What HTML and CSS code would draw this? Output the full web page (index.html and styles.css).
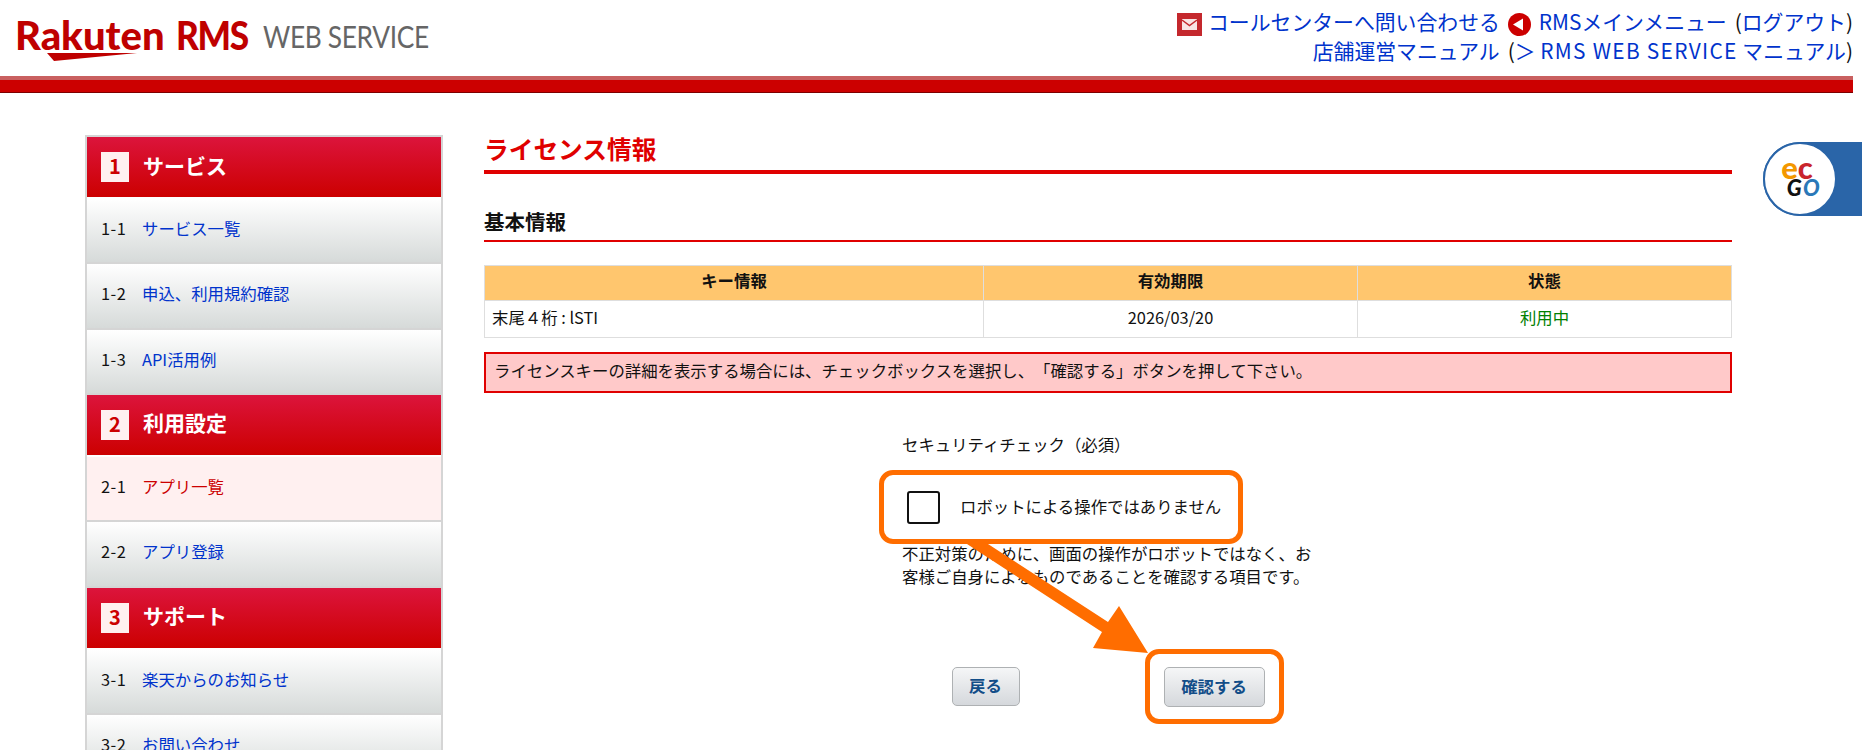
FILE: index.html
```html
<!DOCTYPE html>
<html lang="ja">
<head>
    <meta charset="UTF-8">
    <title>ライセンス情報 | RMS WEB SERVICE</title>
    <link rel="stylesheet" href="styles.css">
</head>
<body>
    <div class="page">
        <header class="site-header">
            <a href="#" class="logo">
                <span class="logo-mark">Rakuten</span>
                <span class="logo-rms">RMS</span>
                <svg class="logo-swoosh" width="92" height="10" viewBox="0 0 92 10"><polygon points="0,1 90,1 7,9" fill="#bf0000"/></svg>
                <span class="logo-service">WEB SERVICE</span>
            </a>
            <div class="top-links">
                <div class="top-line">
                    <svg class="icon-mail" width="25" height="23" viewBox="0 0 25 23">
                        <rect width="25" height="23" fill="#c4282d"/>
                        <rect x="5" y="6" width="15" height="11" fill="#f8e4e4"/>
                        <path d="M5 7l7.5 5.5L20 7" fill="none" stroke="#c4282d" stroke-width="1.5"/>
                    </svg>
                    <a href="#">コールセンターへ問い合わせる</a>
                    <svg class="icon-back" width="23" height="23" viewBox="0 0 23 23">
                        <circle cx="11.5" cy="11.5" r="11.5" fill="#cc0000"/>
                        <polygon points="5,11.5 15,5.5 15,17.5" fill="#fff"/>
                    </svg>
                    <a href="#">RMSメインメニュー</a>
                    <span>(<a href="#">ログアウト</a>)</span>
                </div>
                <div class="top-line">
                    <a href="#">店舗運営マニュアル</a>
                    <span>(<a href="#" class="manual-link">＞ <span class="latin">RMS WEB SERVICE</span> マニュアル</a>)</span>
                </div>
            </div>
        </header>
        <div class="header-bar"></div>

        <div class="layout">
            <nav class="sidebar">
                <h2 class="side-title"><span class="side-num">1</span><span class="side-label">サービス</span></h2>
                <div class="side-item"><span class="side-no">1-1</span><a href="#">サービス一覧</a></div>
                <div class="side-item"><span class="side-no">1-2</span><a href="#">申込、利用規約確認</a></div>
                <div class="side-item"><span class="side-no">1-3</span><a href="#">API活用例</a></div>
                <h2 class="side-title"><span class="side-num">2</span><span class="side-label">利用設定</span></h2>
                <div class="side-item current"><span class="side-no">2-1</span><a href="#">アプリ一覧</a></div>
                <div class="side-item"><span class="side-no">2-2</span><a href="#">アプリ登録</a></div>
                <h2 class="side-title"><span class="side-num">3</span><span class="side-label">サポート</span></h2>
                <div class="side-item"><span class="side-no">3-1</span><a href="#">楽天からのお知らせ</a></div>
                <div class="side-item"><span class="side-no">3-2</span><a href="#">お問い合わせ</a></div>
            </nav>

            <main class="content">
                <h1 class="page-title">ライセンス情報</h1>
                <h2 class="section-title">基本情報</h2>
                <table class="info-table">
                    <tr>
                        <th class="col-key">キー情報</th>
                        <th class="col-date">有効期限</th>
                        <th>状態</th>
                    </tr>
                    <tr>
                        <td>末尾４桁 : lSTI</td>
                        <td class="center">2026/03/20</td>
                        <td class="center status">利用中</td>
                    </tr>
                </table>
                <p class="notice">ライセンスキーの詳細を表示する場合には、チェックボックスを選択し、「確認する」ボタンを押して下さい。</p>

                <div class="security">
                    <p class="security-label">セキュリティチェック（必須）</p>
                    <label class="captcha">
                        <span class="captcha-box"></span>
                        <span class="captcha-text">ロボットによる操作ではありません</span>
                    </label>
                    <p class="security-note">不正対策のために、画面の操作がロボットではなく、お客様ご自身によるものであることを確認する項目です。</p>
                </div>

                <div class="buttons">
                    <button class="btn btn-back">戻る</button>
                    <button class="btn btn-confirm">確認する</button>
                </div>
            </main>
        </div>

        <a href="#" class="ecgo">
            <span class="ecgo-circle">
                <span class="ecgo-top"><span class="c-orange">e</span><span class="c-red">c</span></span>
                <span class="ecgo-bottom"><span class="c-black">G</span><span class="c-blue">O</span></span>
            </span>
        </a>

        <!-- orange marks drawn over the screen -->
        <div class="mark mark-captcha"></div>
        <div class="mark mark-confirm"></div>
        <svg class="mark-arrow" width="190" height="125" viewBox="0 0 190 125">
            <polygon points="7,0 28,0 148,78 159,62 188,109 133,104 142,88" fill="#ff6d00"/>
        </svg>
    </div>
</body>
</html>
```

FILE: styles.css
```css
html,
body {
    margin: 0;
    padding: 0;
    height: 750px;
    overflow: hidden;
    background: #fff;
}
body {
    font-family: "Noto Sans CJK JP", "Noto Sans", sans-serif;
    font-size: 16.4px;
    color: #111;
    text-spacing-trim: space-all;
}
a {
    color: #0033cc;
    text-decoration: none;
}
.page {
    position: relative;
    width: 1853px;
    height: 750px;
}

/* header */
.site-header {
    height: 76px;
    display: flex;
    justify-content: space-between;
}
.logo {
    position: relative;
    display: flex;
    align-items: baseline;
    height: 76px;
    padding-left: 15px;
    box-sizing: border-box;
    line-height: 70px;
    white-space: nowrap;
}
.logo-mark,
.logo-rms {
    font-family: "Lato", sans-serif;
    font-weight: 900;
    font-size: 40px;
    color: #bf0000;
    letter-spacing: 0;
}
.logo-rms {
    margin-left: 11px;
    letter-spacing: -1.5px;
    transform: scaleX(0.88);
    transform-origin: left;
}
.logo-swoosh {
    position: absolute;
    left: 47px;
    top: 52px;
}
.logo-service {
    font-family: "Lato", sans-serif;
    font-size: 30px;
    color: #666;
    margin-left: 6px;
    letter-spacing: -0.4px;
    transform: translateY(-2px) scaleX(0.877);
    transform-origin: left;
}
.top-links {
    padding: 5px 0 0 0;
    font-size: 20.85px;
    line-height: 28px;
}
.top-line {
    display: flex;
    justify-content: flex-end;
    align-items: center;
    gap: 8px;
    white-space: nowrap;
}
.top-line svg {
    margin-top: 8px;
}
.top-line .icon-mail {
    margin-right: -2px;
}
.latin {
    letter-spacing: 1.3px;
}
.header-bar {
    height: 12px;
    background: #cc0000;
    border-top: 4px solid #c96060;
    border-bottom: 1px solid #7d0000;
}

/* layout */
.layout {
    display: flex;
    gap: 41px;
    padding: 42px 0 0 85px;
}
.sidebar {
    width: 354px;
    flex: none;
    border: 2px solid #d5d5d5;
    border-bottom: none;
}
.side-title {
    display: flex;
    align-items: center;
    gap: 14px;
    height: 60px;
    margin: 0 0 2px;
    padding-left: 14px;
    font-size: 21px;
    font-weight: 700;
    color: #fff;
    background: linear-gradient(#dc143c, #cc0000);
}
.side-label {
    padding-bottom: 5px;
}
.side-num {
    width: 28px;
    height: 30px;
    line-height: 28px;
    text-align: center;
    background: #fff0f0;
    color: #cc0000;
    font-size: 20px;
}
.side-item {
    display: flex;
    align-items: center;
    gap: 16px;
    height: 58.33px;
    padding: 0 0 5px 14px;
    border-bottom: 2px solid #d5d5d5;
    background: linear-gradient(#fff, #d6dad9);
}
.side-no {
    width: 25px;
    letter-spacing: 0.5px;
    white-space: nowrap;
}
.side-item.current {
    background: #fff0f0;
}
.side-item.current a {
    color: #cc0000;
}

/* main */
.content {
    width: 1248px;
}
.page-title {
    margin: 0;
    height: 35px;
    line-height: 27px;
    font-size: 24.7px;
    font-weight: 700;
    color: #e00000;
    border-bottom: 4px solid #e00000;
}
.section-title {
    margin: 35px 0 0;
    height: 31px;
    line-height: 24px;
    font-size: 20.5px;
    font-weight: 700;
    color: #111;
    border-bottom: 2px solid #e00000;
}
.info-table {
    width: 100%;
    margin-top: 23px;
    border-collapse: collapse;
    table-layout: fixed;
}
.info-table th,
.info-table td {
    border: 1px solid #dedede;
    padding: 0 7px 4px;
}
.info-table th {
    height: 27px;
    padding-bottom: 7px;
    background: #ffc66e;
    font-weight: 700;
    text-align: center;
}
.info-table td {
    height: 32px;
}
.col-key {
    width: 484px;
}
.col-date {
    width: 359px;
}
.center {
    text-align: center;
}
.status {
    color: #008000;
}
.notice {
    margin: 14px 0 0;
    padding: 0 8px;
    height: 37px;
    line-height: 32px;
    background: #ffc9c9;
    border: 2px solid #e00000;
}
.security {
    width: 412px;
    margin: 0 auto;
}
.security-label {
    margin: 39px 0 0;
    line-height: 24px;
}
.captcha {
    display: flex;
    align-items: center;
    gap: 20px;
    height: 74px;
    margin-top: 14px;
    padding-left: 5px;
    white-space: nowrap;
}
.captcha-box {
    width: 29px;
    height: 29px;
    border: 2px solid #111;
    border-radius: 3px;
}
.captcha-text {
    padding-bottom: 2px;
}
.security-note {
    margin: -2px 0 0;
    line-height: 23px;
}
.buttons {
    display: flex;
    justify-content: center;
    gap: 144px;
    margin-top: 79px;
}
.btn {
    height: 39px;
    padding: 0 0 3px;
    border: 1px solid #aeb1b3;
    border-radius: 5px;
    background: linear-gradient(#f5f6f7, #d5d8dc);
    font-family: inherit;
    font-size: 16.4px;
    font-weight: 700;
    color: #124d88;
}
.btn-back {
    width: 68px;
}
.btn-confirm {
    width: 101px;
    height: 40px;
}

/* ecgo tab, fixed to the right edge */
.ecgo {
    position: absolute;
    left: 1763px;
    top: 142px;
    width: 99px;
    height: 74px;
    background: #2a65a8;
    border-radius: 37px 0 0 37px;
}
.ecgo-circle {
    display: flex;
    flex-direction: column;
    align-items: center;
    justify-content: center;
    box-sizing: border-box;
    width: 74px;
    height: 74px;
    padding-bottom: 4px;
    border: 2px solid #2a65a8;
    border-radius: 50%;
    background: #fff;
    font-family: "Lato", sans-serif;
    font-weight: 900;
}
.ecgo-top {
    height: 17px;
    line-height: 17px;
    font-size: 31px;
    margin: 0 0 3px -6px;
}
.ecgo-bottom {
    height: 17px;
    line-height: 17px;
    font-size: 22px;
    font-style: italic;
    letter-spacing: 1.5px;
    margin-left: 8px;
}
.c-orange {
    color: #f39800;
}
.c-red {
    color: #c9252c;
}
.c-black {
    color: #111;
}
.c-blue {
    color: #2a78b8;
}

/* annotation marks */
.mark {
    position: absolute;
    border: 5px solid #ff6d00;
    border-radius: 14px;
    box-sizing: border-box;
}
.mark-captcha {
    left: 879px;
    top: 470px;
    width: 364px;
    height: 74px;
}
.mark-confirm {
    left: 1145px;
    top: 649px;
    width: 139px;
    height: 75px;
}
.mark-arrow {
    position: absolute;
    left: 960px;
    top: 544px;
}
```
